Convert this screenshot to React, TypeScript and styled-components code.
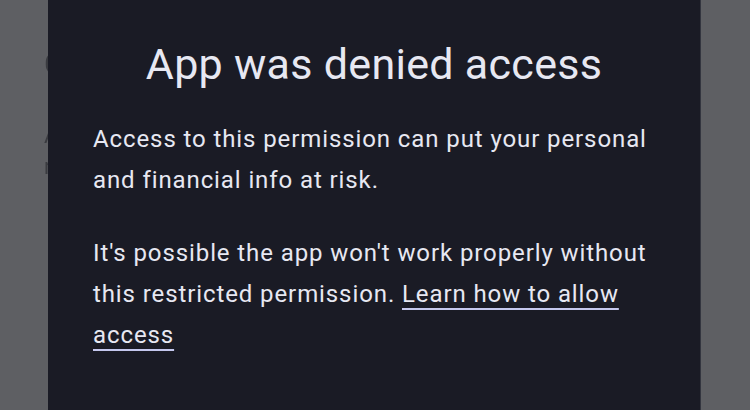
import React from "react";
import styled, { createGlobalStyle } from "styled-components";

const Global = createGlobalStyle`
  html, body { margin: 0; padding: 0; }
  body { width: 750px; height: 410px; overflow: hidden; background: #5e5f63; }
`;

const Page = styled.div`
  position: relative;
  width: 750px;
  height: 410px;
  background: #5e5f63;
  overflow: hidden;
  font-family: Roboto, "Noto Sans", sans-serif;
`;

const Behind = styled.div`
  display: flex;
  flex-direction: column;
  padding: 44px 0 0 44px;
  color: #3a3b40;
  filter: blur(0.6px);
`;

const BehindHeading = styled.div`
  font-size: 30px;
  line-height: 40px;
  margin-bottom: 36px;
`;

const BehindText = styled.div`
  font-size: 22px;
  line-height: 31px;
  width: 300px;
`;

const Dialog = styled.div`
  position: absolute;
  left: 48px;
  top: 0;
  bottom: 0;
  width: 653px;
  background: #1a1b25;
  border-right: 1px solid #33353f;
  box-sizing: border-box;
  padding: 38px 45px 0 45px;
  display: flex;
  flex-direction: column;
  color: #e7e8f2;
`;

const Title = styled.h1`
  margin: 0;
  font-family: Roboto, sans-serif;
  font-weight: 400;
  font-size: 43px;
  line-height: 52px;
  text-align: center;
  letter-spacing: 0.3px;
`;

const Body = styled.div`
  margin-top: 29px;
  display: flex;
  flex-direction: column;
  gap: 32px;
`;

const Para = styled.p`
  margin: 0;
  font-family: Roboto, sans-serif;
  font-size: 24px;
  line-height: 41px;
  letter-spacing: 0.9px;
`;

const Link = styled.a`
  color: #e7e8f2;
  text-decoration: underline;
  text-decoration-color: #c5c8ee;
  text-decoration-thickness: 2px;
  text-underline-offset: 6px;
`;

export default function App() {
  return (
    <>
      <Global />
      <Page>
        <Behind>
          <BehindHeading>Camera</BehindHeading>
          <BehindText>Apps with this permission are not allowed r</BehindText>
        </Behind>
        <Dialog>
          <Title>App was denied access</Title>
          <Body>
            <Para>
              Access to this permission can put your personal and financial info at risk.
            </Para>
            <Para>
              It's possible the app won't work properly without this restricted permission.{" "}
              <Link href="#">Learn how to allow access</Link>
            </Para>
          </Body>
        </Dialog>
      </Page>
    </>
  );
}
